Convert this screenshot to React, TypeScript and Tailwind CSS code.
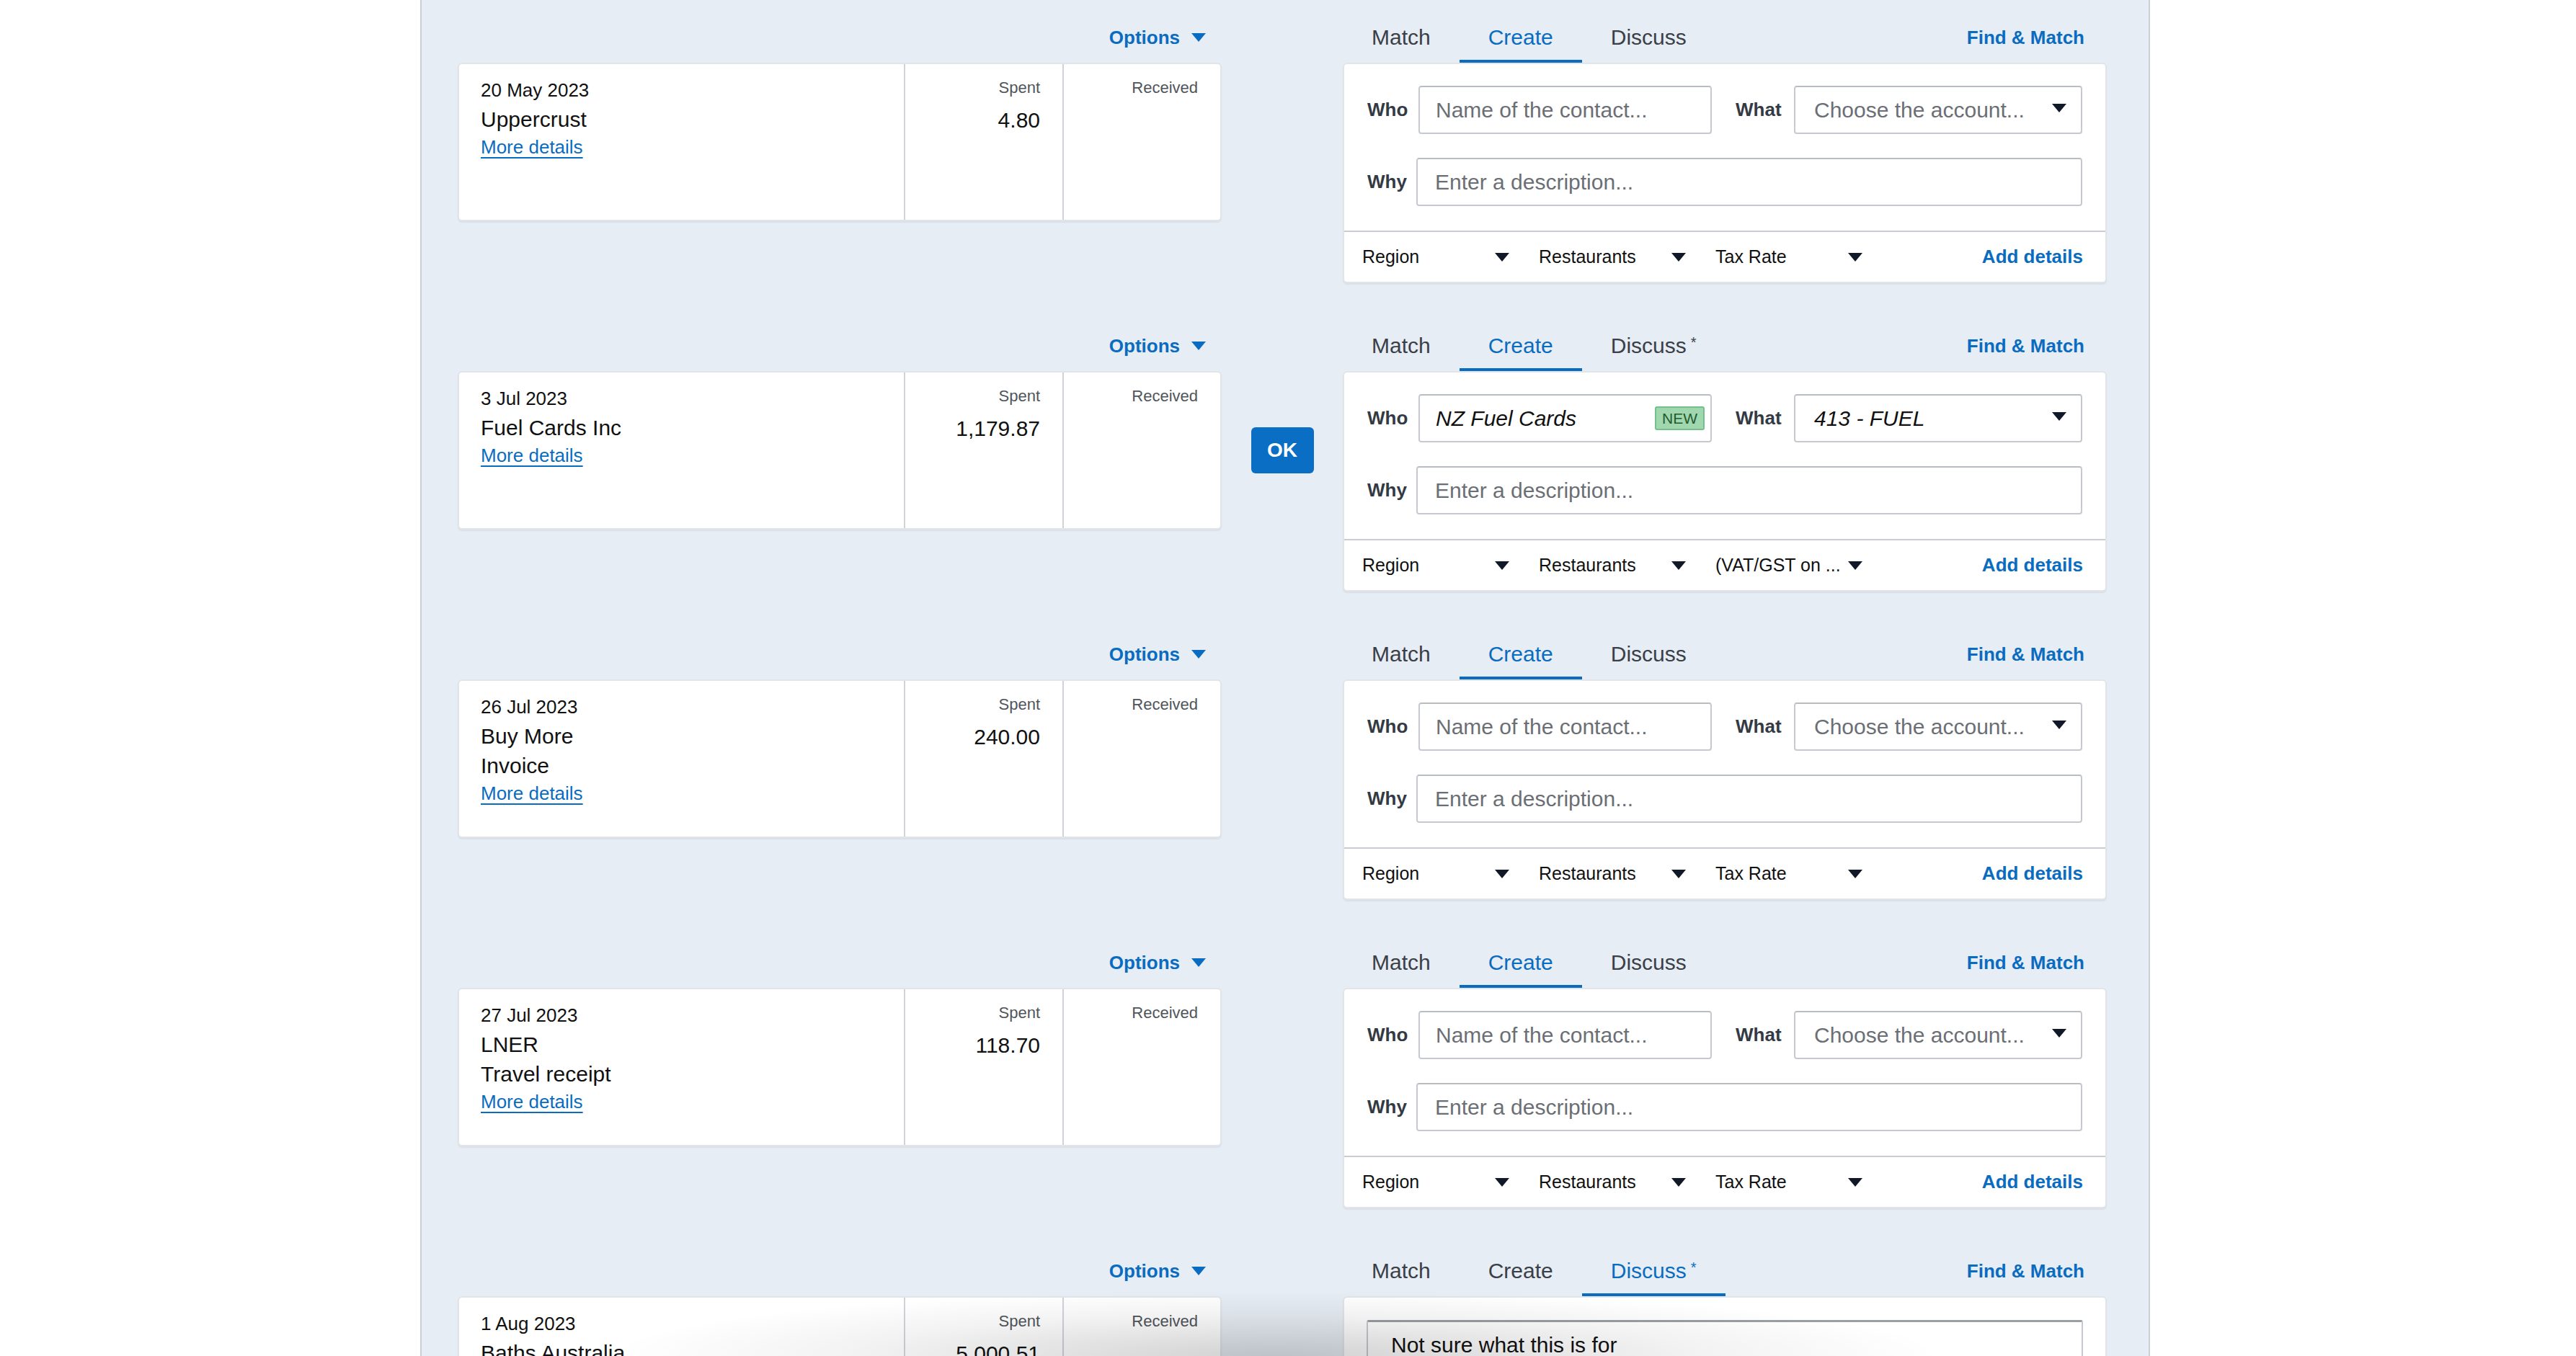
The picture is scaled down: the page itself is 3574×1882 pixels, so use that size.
import React from 'react';

type Row = {
  date: string;
  lines: string[];
  spent: string;
  ok?: boolean;
  star?: boolean;
  mode: 'empty' | 'filled' | 'discuss';
};

const rows: Row[] = [
  { date: '20 May 2023', lines: ['Uppercrust'], spent: '4.80', mode: 'empty' },
  { date: '3 Jul 2023', lines: ['Fuel Cards Inc'], spent: '1,179.87', ok: true, star: true, mode: 'filled' },
  { date: '26 Jul 2023', lines: ['Buy More', 'Invoice'], spent: '240.00', mode: 'empty' },
  { date: '27 Jul 2023', lines: ['LNER', 'Travel receipt'], spent: '118.70', mode: 'empty' },
  { date: '1 Aug 2023', lines: ['Baths Australia'], spent: '5,000.51', star: true, mode: 'discuss' },
];

const Caret = ({ color = '#111827' }: { color?: string }) => (
  <svg width="20" height="12" viewBox="0 0 20 12" className="shrink-0">
    <polygon points="0,0 20,0 10,12" fill={color} />
  </svg>
);

const Tabs = ({ active, star }: { active: string; star?: boolean }) => (
  <div className="flex">
    {['Match', 'Create', 'Discuss'].map((t) => {
      const on = t === active;
      return (
        <div
          key={t}
          className={`px-[40px] pb-[13px] leading-[36px] text-[30px] border-b-[4px] ${
            on ? 'border-[#0a6cc0] text-[#0a6cc0]' : 'border-transparent text-[#3a3f48]'
          }`}
        >
          {t}
          {t === 'Discuss' && star && <span className="ml-[6px] text-[20px] align-top leading-[26px]">*</span>}
        </div>
      );
    })}
  </div>
);

const FooterSelect = ({ label }: { label: string }) => (
  <div className="w-[204px] mr-[41px] flex items-center justify-between">
    <span className="whitespace-nowrap">{label}</span>
    <Caret />
  </div>
);

const CreateForm = ({ filled }: { filled: boolean }) => (
  <>
    <div className="px-[32px] pt-[30px] pb-[34px] flex flex-col gap-[33px]">
      <div className="flex items-center">
        <div className="w-[71px] text-[26px] font-bold text-[#333a44]">Who</div>
        <div className="flex-1 h-[67px] border-2 border-[#c6cad0] border-t-[#b8bdc4] rounded-[4px] flex items-center pl-[22px] pr-[8px] text-[30px]">
          {filled ? (
            <>
              <span className="italic text-[#111]">NZ Fuel Cards</span>
              <span className="ml-auto h-[33px] px-[8px] flex items-center rounded-[3px] border-2 border-[#74c08a] bg-[#a0d7ae] text-[21px] text-[#1f5a30]">
                NEW
              </span>
            </>
          ) : (
            <span className="text-[#6b6f75]">Name of the contact...</span>
          )}
        </div>
        <div className="ml-[33px] w-[81px] text-[26px] font-bold text-[#333a44]">What</div>
        <div className="w-[400px] h-[67px] border-2 border-[#c6cad0] border-t-[#b8bdc4] rounded-[4px] flex items-center justify-between pl-[26px] pr-[20px] text-[30px]">
          {filled ? (
            <span className="italic text-[#111]">413 - FUEL</span>
          ) : (
            <span className="text-[#6b6f75]">Choose the account...</span>
          )}
          <div className="-mt-[6px]">
            <Caret />
          </div>
        </div>
      </div>
      <div className="flex items-center">
        <div className="w-[68px] text-[26px] font-bold text-[#333a44]">Why</div>
        <div className="flex-1 h-[67px] border-2 border-[#c6cad0] border-t-[#b8bdc4] rounded-[4px] flex items-center pl-[24px] text-[30px] text-[#6b6f75]">
          Enter a description...
        </div>
      </div>
    </div>
    <div className="border-t-2 border-[#c9cdd3] flex-1 flex items-center pl-[25px] pr-[31px] text-[25px] text-[#111]">
      <FooterSelect label="Region" />
      <FooterSelect label="Restaurants" />
      <FooterSelect label={filled ? '(VAT/GST on ...' : 'Tax Rate'} />
      <span className="ml-auto font-bold text-[26px] text-[#0a6cc0]">Add details</span>
    </div>
  </>
);

const RowBlock = ({ row }: { row: Row }) => (
  <div className="flex flex-col mb-[35px]">
    <div className="h-[87px] flex items-end">
      <div className="w-[1060px] flex justify-end pr-[22px] pb-[17px]">
        <div className="flex items-center gap-[16px] leading-[36px] text-[26px] font-bold text-[#0a6cc0]">
          Options
          <Caret color="#0a6cc0" />
        </div>
      </div>
      <div className="w-[168px]" />
      <div className="w-[1060px] flex items-end justify-between">
        <Tabs active={row.mode === 'discuss' ? 'Discuss' : 'Create'} star={row.star} />
        <div className="pr-[31px] pb-[17px] leading-[36px] text-[26px] font-bold text-[#0a6cc0]">Find &amp; Match</div>
      </div>
    </div>
    <div className="flex items-start">
      <div className="w-[1060px] h-[220px] bg-white rounded-[6px] border-2 border-[#e1e5ea] shadow-[0_2px_2px_rgba(0,0,0,0.06)] flex">
        <div className="w-[619px] border-r-2 border-[#d0d4d9] pl-[30px] pt-[19px]">
          <div className="text-[26px] leading-[34px] text-[#111]">{row.date}</div>
          <div className="mt-[3px] text-[30px] leading-[41px] text-[#111]">
            {row.lines.map((l) => (
              <div key={l}>{l}</div>
            ))}
          </div>
          <div className="text-[26px] leading-[36px]">
            <span className="text-[#0a6cc0] underline decoration-2 underline-offset-[5px]">More details</span>
          </div>
        </div>
        <div className="w-[220px] border-r-2 border-[#d0d4d9] pr-[31px] pt-[18px] text-right">
          <div className="text-[22px] leading-[30px] text-[#50555c]">Spent</div>
          <div className="mt-[10px] text-[30px] leading-[40px] text-[#111]">{row.spent}</div>
        </div>
        <div className="flex-1 pr-[31px] pt-[18px] text-right">
          <div className="text-[22px] leading-[30px] text-[#50555c]">Received</div>
        </div>
      </div>
      <div className="w-[168px] h-[220px] flex items-center justify-center">
        {row.ok && (
          <div className="w-[87px] h-[64px] rounded-[6px] bg-[#0a6ec4] flex items-center justify-center text-white font-bold text-[28px]">
            OK
          </div>
        )}
      </div>
      <div className="w-[1060px] h-[306px] bg-white rounded-[6px] border-2 border-[#e1e5ea] shadow-[0_2px_2px_rgba(0,0,0,0.06)] flex flex-col">
        {row.mode === 'discuss' ? (
          <div className="px-[31px] pt-[31px]">
            <div className="h-[200px] border-2 border-[#c6cad0] border-t-[3px] border-t-[#9a9ea5] rounded-[3px] pl-[32px] pt-[12px] text-[30px] leading-[40px] text-[#111]">
              Not sure what this is for
            </div>
          </div>
        ) : (
          <CreateForm filled={row.mode === 'filled'} />
        )}
      </div>
    </div>
  </div>
);

export default function App() {
  return (
    <div className="relative h-[1882px] overflow-hidden bg-white font-['Liberation_Sans',Arial,sans-serif]">
      <div className="ml-[583px] w-[2400px] h-full bg-[#e7edf4] border-x-2 border-[#cbd0d7] pl-[50px]">
        {rows.map((r) => (
          <RowBlock key={r.date} row={r} />
        ))}
      </div>
      <div className="absolute left-[860px] w-[1820px] bottom-0 h-[90px] pointer-events-none bg-[radial-gradient(ellipse_at_bottom,rgba(0,0,0,0.18),rgba(0,0,0,0.05)_45%,transparent_72%)]" />
    </div>
  );
}
